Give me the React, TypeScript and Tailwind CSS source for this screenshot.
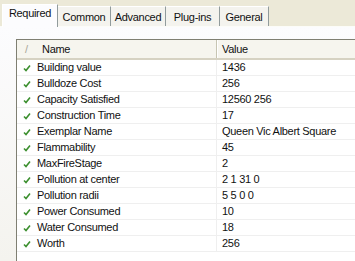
import React from 'react';

const tabs = ['Required', 'Common', 'Advanced', 'Plug-ins', 'General'];
const tabWidths = ['w-[56px]', 'w-[53px]', 'w-[55px]', 'w-[54px]', 'w-[49px]'];

const rows = [
  { name: 'Building value', value: '1436' },
  { name: 'Bulldoze Cost', value: '256' },
  { name: 'Capacity Satisfied', value: '12560 256' },
  { name: 'Construction Time', value: '17' },
  { name: 'Exemplar Name', value: 'Queen Vic Albert Square' },
  { name: 'Flammability', value: '45' },
  { name: 'MaxFireStage', value: '2' },
  { name: 'Pollution at center', value: '2 1 31 0' },
  { name: 'Pollution radii', value: '5 5 0 0' },
  { name: 'Power Consumed', value: '10' },
  { name: 'Water Consumed', value: '18' },
  { name: 'Worth', value: '256' },
];

const Check = () => (
  <svg width="8" height="8" viewBox="0 0 8 8" className="shrink-0">
    <path d="M1 4.5 L3 6.5 L7 1.5" fill="none" stroke="#3b8f2e" strokeWidth="1.6" />
  </svg>
);

const App = () => {
  return (
    <div className="w-[355px] h-[261px] bg-[#ECE9D8] overflow-hidden text-[11px] tracking-[-0.3px] text-[#111] font-['Liberation_Sans',Arial,sans-serif] flex flex-col">
      {/* Tab strip */}
      <div className="h-[26px] flex items-end pl-[2px] shrink-0">
        {tabs.map((t, i) => (
          <div
            key={t}
            className={
              i === 0
                ? `${tabWidths[i]} h-[23px] -mb-px z-10 flex items-center justify-center bg-[#FCFCFE] border-t border-l border-r border-t-white border-l-white border-r-[#919B9C] pb-[5px]`
                : `${tabWidths[i]} h-[20px] flex items-center justify-center bg-[#F4F3EE] border-t border-r border-t-white border-r-[#919B9C] pt-[1px]`
            }
          >
            {t}
          </div>
        ))}
      </div>

      {/* Tab panel */}
      <div className="flex-1 border-t border-[#FCFCF8] bg-gradient-to-b from-[#FCFCFE] to-[#F4F3EE] pt-[12px] pl-[16px] flex flex-col">
        <div className="flex-1 bg-white border-t border-l border-[#7F7F72] flex flex-col">
          {/* Header */}
          <div className="h-[20px] flex bg-[#F6F5EE] border-b-2 border-[#D6D2C2] shrink-0">
            <div className="w-[200px] flex items-center border-r border-[#C7C5B2]">
              <span className="w-[25px] pl-[8px] text-[#A8A698]">/</span>
              <span>Name</span>
            </div>
            <div className="flex-1 flex items-center pl-[4px] border-l border-white">Value</div>
          </div>
          {/* Rows */}
          <div className="flex flex-col">
            {rows.map((r) => (
              <div key={r.name} className="h-[16px] flex border-b border-[#EFEFEF]">
                <div className="w-[200px] flex items-center pl-[6px] gap-[6px] border-r border-[#EFEFEF]">
                  <Check />
                  <span>{r.name}</span>
                </div>
                <div className="flex-1 flex items-center pl-[5px]">{r.value}</div>
              </div>
            ))}
          </div>
        </div>
      </div>
    </div>
  );
};

export default App;
